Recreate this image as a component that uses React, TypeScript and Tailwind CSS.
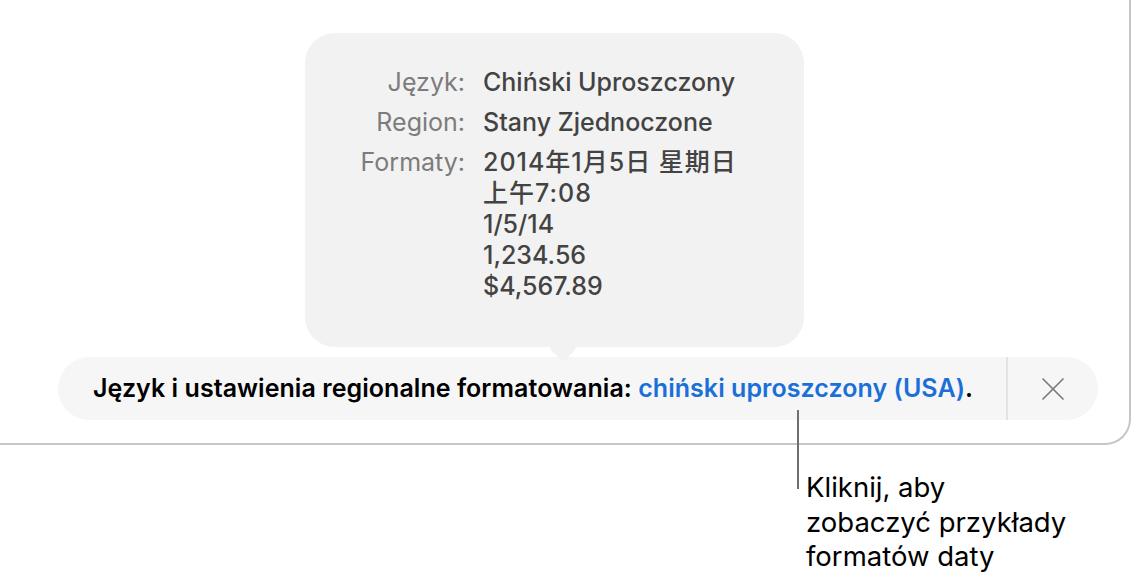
import { X } from "lucide-react";

const sans = "font-['Inter','Noto_Sans_CJK_SC',sans-serif]";

// one label/value row in the language popover
const Row = ({ label, lines }: { label: string; lines: string[] }) => (
    <div className="flex">
        <div className="w-[160px] shrink-0 text-right text-[#7c7c7c] leading-[31px]">{label}</div>
        <div className="ml-[18px] text-[#434343] font-medium leading-[31px]">
            {lines.map((l, i) => (
                <div key={i} className={/[年午]/.test(l) ? "tracking-[1px]" : ""}>
                    {l}
                </div>
            ))}
        </div>
    </div>
);

export default function App() {
    return (
        <div className={`relative w-[1136px] h-[577px] bg-white overflow-hidden ${sans}`}>
            {/* window frame, only right and bottom edges are visible */}
            <div className="w-[1131px] h-[445px] border-r-2 border-b-2 border-[#c6c6c6] rounded-br-[26px] flex flex-col pt-[33px]">
                {/* popover */}
                <div className="relative ml-[305px] w-[499px] h-[314px] rounded-[30px] bg-[#f2f2f2] pt-[34px] text-[25px]">
                    <div className="flex flex-col gap-[9px]">
                        <Row label="Język:" lines={["Chiński Uproszczony"]} />
                        <Row label="Region:" lines={["Stany Zjednoczone"]} />
                        <Row
                            label="Formaty:"
                            lines={["2014年1月5日 星期日", "上午7:08", "1/5/14", "1,234.56", "$4,567.89"]}
                        />
                    </div>
                    {/* arrow */}
                    <div className="absolute left-[248px] top-[305px] w-[20px] h-[20px] rotate-45 rounded-[4px] bg-[#f2f2f2]" />
                </div>

                {/* info banner */}
                <div className="mt-[10px] ml-[58px] w-[1040px] h-[63px] rounded-full bg-[#f6f6f6] flex items-center">
                    <div className="flex-1 pl-[35px] text-[25px] font-semibold text-black tracking-[0.05px] whitespace-nowrap">
                        Język i ustawienia regionalne formatowania:{" "}
                        <span className="text-[#1a6fd8]">chiński uproszczony (USA)</span>.
                    </div>
                    <div className="w-[2px] h-full bg-[#e3e3e3]" />
                    <div className="w-[90px] flex justify-center">
                        <X className="w-[40px] h-[40px] text-[#7a7a7a]" strokeWidth={1} />
                    </div>
                </div>
            </div>

            {/* callout */}
            <div className="absolute left-[797px] top-[410px] w-[2px] h-[79px] bg-[#6e6e6e]" />
            <div className="absolute left-[806px] top-[470px] text-[27.5px] leading-[34.5px] text-black">
                Kliknij, aby
                <br />
                zobaczyć przykłady
                <br />
                formatów daty
            </div>
        </div>
    );
}
